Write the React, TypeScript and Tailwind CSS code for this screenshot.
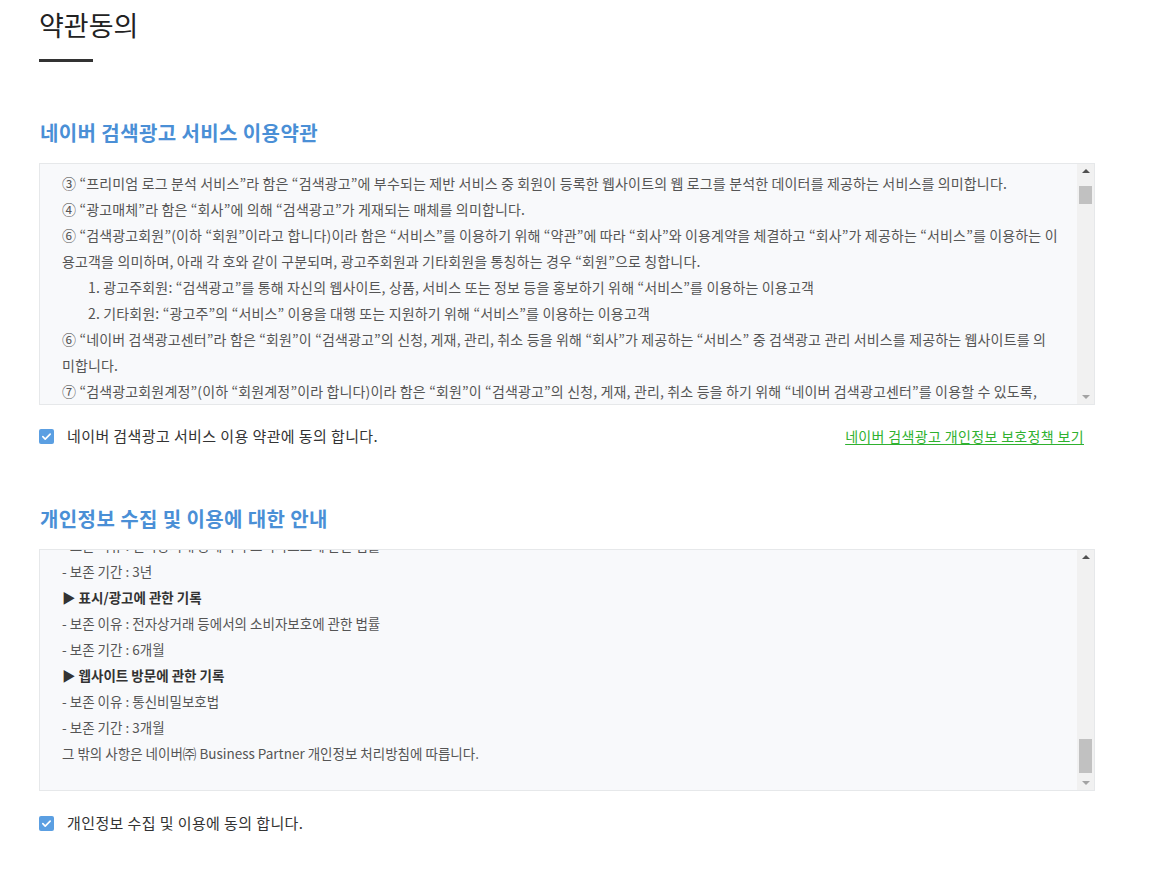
const FONT = { fontFamily: '"Noto Sans CJK KR", "Noto Sans", sans-serif' };

const Scrollbar = ({ thumbTop, thumbHeight }: { thumbTop: number; thumbHeight: number }) => (
  <div className="relative w-[17px] shrink-0 bg-[#f1f1f1]">
    <div className="absolute left-0 right-0 top-[5px] flex justify-center">
      <div className="h-0 w-0 border-x-[4px] border-b-[4px] border-x-transparent border-b-[#505050]" />
    </div>
    <div
      className="absolute left-[2px] right-[2px] bg-[#c1c1c1]"
      style={{ top: thumbTop, height: thumbHeight }}
    />
    <div className="absolute bottom-[5px] left-0 right-0 flex justify-center">
      <div className="h-0 w-0 border-x-[4px] border-t-[4px] border-x-transparent border-t-[#a3a3a3]" />
    </div>
  </div>
);

const Check = () => (
  <span className="flex h-[15px] w-[15px] items-center justify-center rounded-[2px] bg-[#5b9fe2]">
    <svg width="11" height="11" viewBox="0 0 12 12" fill="none">
      <path d="M2 6.2l2.6 2.6L10 3.4" stroke="#fff" strokeWidth="1.8" strokeLinecap="round" strokeLinejoin="round" />
    </svg>
  </span>
);

const terms = [
  { t: "③ “프리미엄 로그 분석 서비스”라 함은 “검색광고”에 부수되는 제반 서비스 중 회원이 등록한 웹사이트의 웹 로그를 분석한 데이터를 제공하는 서비스를 의미합니다." },
  { t: "④ “광고매체”라 함은 “회사”에 의해 “검색광고”가 게재되는 매체를 의미합니다." },
  { t: "⑥ “검색광고회원”(이하 “회원”이라고 합니다)이라 함은 “서비스”를 이용하기 위해 “약관”에 따라 “회사”와 이용계약을 체결하고 “회사”가 제공하는 “서비스”를 이용하는 이" },
  { t: "용고객을 의미하며, 아래 각 호와 같이 구분되며, 광고주회원과 기타회원을 통칭하는 경우 “회원”으로 칭합니다." },
  { t: "1. 광고주회원: “검색광고”를 통해 자신의 웹사이트, 상품, 서비스 또는 정보 등을 홍보하기 위해 “서비스”를 이용하는 이용고객", indent: true },
  { t: "2. 기타회원: “광고주”의 “서비스” 이용을 대행 또는 지원하기 위해 “서비스”를 이용하는 이용고객", indent: true },
  { t: "⑥ “네이버 검색광고센터”라 함은 “회원”이 “검색광고”의 신청, 게재, 관리, 취소 등을 위해 “회사”가 제공하는 “서비스” 중 검색광고 관리 서비스를 제공하는 웹사이트를 의" },
  { t: "미합니다." },
  { t: "⑦ “검색광고회원계정”(이하 “회원계정”이라 합니다)이라 함은 “회원”이 “검색광고”의 신청, 게재, 관리, 취소 등을 하기 위해 “네이버 검색광고센터”를 이용할 수 있도록," },
  { t: "“회사”가 “회원”에게 부여하는 계정을 의미합니다." },
];

const privacy = [
  { t: "- 보존 이유 : 전자상거래 등에서의 소비자보호에 관한 법률" },
  { t: "- 보존 기간 : 3년" },
  { t: "▶ 표시/광고에 관한 기록", bold: true },
  { t: "- 보존 이유 : 전자상거래 등에서의 소비자보호에 관한 법률" },
  { t: "- 보존 기간 : 6개월" },
  { t: "▶ 웹사이트 방문에 관한 기록", bold: true },
  { t: "- 보존 이유 : 통신비밀보호법" },
  { t: "- 보존 기간 : 3개월" },
  { t: "그 밖의 사항은 네이버㈜ Business Partner 개인정보 처리방침에 따릅니다." },
];

export default function App() {
  return (
    <div className="min-h-[872px] w-[1154px] bg-white pl-[39px] pr-[59px]" style={FONT}>
      {/* page title */}
      <h1 className="pt-[6px] text-[27px] leading-[38px] font-normal text-[#222]">약관동의</h1>
      <div className="mt-[15px] h-[3px] w-[54px] bg-[#333]" />

      {/* terms */}
      <h2 className="mt-[57px] pl-px text-[20px] leading-[28px] font-bold tracking-[0.4px] text-[#4a8fd6]">
        네이버 검색광고 서비스 이용약관
      </h2>
      <div className="mt-[16px] flex h-[242px] border border-[#e6e8ea] bg-[#f8f9fb]">
        <div className="flex-1 overflow-hidden pl-[22px] pt-[6px] text-[14px] leading-[26px] tracking-[0.15px] text-[#555]">
          {terms.map((l, i) => (
            <div key={i} className={`whitespace-nowrap ${l.indent ? "pl-[26px]" : ""}`}>
              {l.t}
            </div>
          ))}
        </div>
        <Scrollbar thumbTop={22} thumbHeight={18} />
      </div>
      <div className="mt-[16px] flex h-[30px] items-center justify-between">
        <label className="flex items-center gap-[13px] text-[15px] tracking-[0.4px] text-[#333]">
          <Check />
          네이버 검색광고 서비스 이용 약관에 동의 합니다.
        </label>
        <a className="mr-[11px] text-[14px] tracking-[0.35px] text-[#2fb12f] underline underline-offset-2">
          네이버 검색광고 개인정보 보호정책 보기
        </a>
      </div>

      {/* privacy */}
      <h2 className="mt-[54px] pl-px text-[20px] leading-[28px] font-bold tracking-[0.4px] text-[#4a8fd6]">
        개인정보 수집 및 이용에 대한 안내
      </h2>
      <div className="mt-[16px] flex h-[242px] border border-[#e6e8ea] bg-[#f8f9fb]">
        <div className="flex-1 overflow-hidden pl-[22px] text-[13.5px] leading-[26px] text-[#555]">
          <div className="-mt-[18px]">
            {privacy.map((l, i) => (
              <div key={i} className={`whitespace-nowrap ${l.bold ? "font-bold text-[#333]" : ""}`}>
                {l.t}
              </div>
            ))}
          </div>
        </div>
        <Scrollbar thumbTop={189} thumbHeight={34} />
      </div>
      <div className="mt-[17px] flex h-[30px] items-center">
        <label className="flex items-center gap-[13px] text-[15px] tracking-[0.4px] text-[#333]">
          <Check />
          개인정보 수집 및 이용에 동의 합니다.
        </label>
      </div>
    </div>
  );
}
